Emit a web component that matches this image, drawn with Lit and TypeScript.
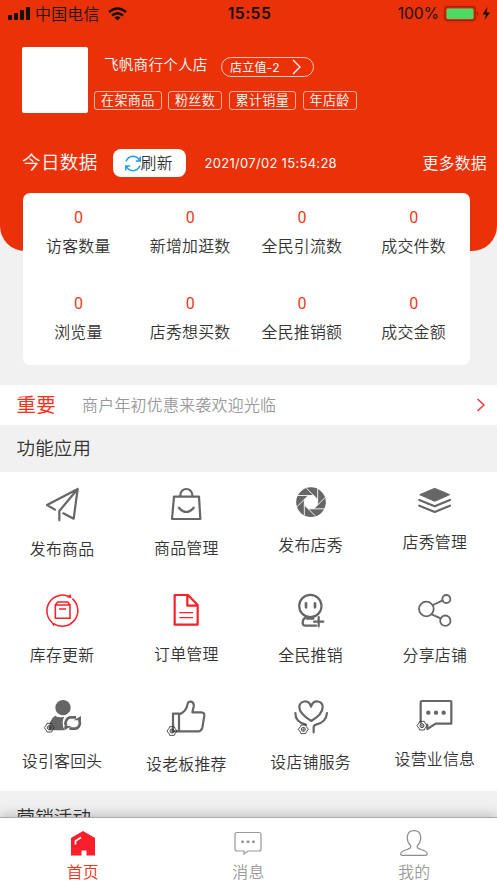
import { LitElement, html, css, svg } from "lit";
import { customElement } from "lit/decorators.js";

const gear = (x: number, y: number) => svg`
  <g transform="translate(${x} ${y})" fill="none" stroke="#333" stroke-width="2.6">
    <path d="M-7 -13H7L9 -8L15 0L9 8L7 13H-7L-9 8L-15 0L-9 -8Z"/>
    <circle r="6"/><path d="M0 -6V6M-6 0H6" stroke-width="1.6"/>
  </g>`;

const blades = [0, 45, 90, 135, 180, 225, 270, 315];

const apps = [
  { label: "发布商品", h: 33, x: 126, y: 54, icon: svg`
    <path class="s6" d="M165 119L141 105L233 57L221 146L190 130M178 151V123L233 57"/>` },
  { label: "商品管理", h: 32.5, x: 499, y: 54, icon: svg`
    <path class="s6" d="M523 80H598L602 147H517ZM542 79V75a18 18 0 0 1 36 0V79M538 113Q560 139 582 113"/>` },
  { label: "发布店秀", h: 29, x: 131, y: 54, icon: svg`
    <g transform="translate(191 96.5)">
      <circle r="44.5" fill="#666"/>
      ${blades.map((a) => svg`<path transform="rotate(${a})" d="M8.3 -20H-40" stroke="#fff" stroke-width="2.6"/>`)}
      <path fill="#fff" d="M8.3 -20H-8.3L-20 -8.3V8.3L-8.3 20H8.3L20 8.3V-8.3Z"/>
    </g>` },
  { label: "店秀管理", h: 26, x: 504, y: 54, icon: svg`
    <path fill="#666" stroke="#666" stroke-width="3" stroke-linejoin="round" d="M563 55L608 74L563 94L518 74Z"/>
    <path class="s6" stroke-linecap="butt" d="M517 90L563 109L609 90M517 107L563 126L609 107"/>` },
  { label: "库存更新", h: 33, x: 126, y: 372, icon: svg`
    <g fill="none" stroke="#f5222d" stroke-width="4.6">
      <path d="M208 380A47 47 0 0 0 157 458M164 463A47 47 0 0 0 217 386"/>
      <path d="M166 405H210V445H166ZM166 405L173 396H203L210 405M177 417H198"/>
    </g>
    <path fill="#f5222d" d="M200 382L211 372L215 385ZM154 456L167 461L160 469Z"/>` },
  { label: "订单管理", h: 32.5, x: 499, y: 372, icon: svg`
    <g fill="none" stroke="#fb2029" stroke-width="6.600" stroke-linejoin="round">
      <path d="M525 375H565L594 405V464H525ZM563 377V407H593"/>
      <path d="M539 428H580M539 443H580" stroke-width="4"/>
    </g>` },
  { label: "全民推销", h: 33, x: 131, y: 372, icon: svg`
    <circle class="s6" cx="189" cy="408" r="33.5"/>
    <path class="s6" d="M176 400V412M203 400V412" style="stroke-width:8"/>
    <path class="s6" d="M174 443Q166 447 166 458Q166 467 174 467H206M179 446H198M214 441V469M200 455H228"/>` },
  { label: "分享店铺", h: 33, x: 504, y: 372, icon: svg`
    <g class="s5"><circle cx="538" cy="417" r="22"/><circle cx="598" cy="387" r="12"/><circle cx="595" cy="452" r="15.5"/>
    <path d="M558 405L587 391M554 433L581 445"/></g>` },
  { label: "设引客回头", h: 33, x: 126, y: 90, icon: svg`
    <circle cx="189" cy="113" r="23" fill="#666"/>
    <path fill="#666" d="M165 137Q178 145 193 140Q182 158 194 181H147Q146 150 165 137Z"/>
    <path fill="none" stroke="#666" stroke-width="8" stroke-linejoin="round" d="M199 168L196 160Q200 142 212 142H228M238 150L240 160Q236 176 224 176H208"/>
    <path fill="#666" d="M221 151H243V138ZM215 168H193V181Z"/>
    ${gear(148, 173)}` },
  { label: "设老板推荐", h: 36, x: 499, y: 90, icon: svg`
    <path class="s6" d="M520 131H538V184H520ZM538 133C553 128 562 116 564 101Q566 93 574 95Q584 98 582 110L578 127H605Q615 128 614 137L608 173Q605 184 595 184H538"/>
    ${gear(517, 183)}` },
  { label: "设店铺服务", h: 34, x: 131, y: 90, icon: svg`
    <path class="s6" d="M192 153C172 141 156 128 156 112C156 92 184 86 191 110C199 86 226 92 226 112C226 128 212 141 192 153ZM144 129C144 148 158 160 176 164M239 129C237 151 224 160 206 164Q199 166 199 172V187"/>
    ${gear(168, 178)}` },
  { label: "设营业信息", h: 31, x: 504, y: 90, icon: svg`
    <path class="s6" d="M524 93H611Q613 93 613 96V161H566L541 177V164M521 158V97Q521 93 525 93"/>
    <g fill="#666"><circle cx="544" cy="128" r="6.500"/><circle cx="567" cy="128" r="6.500"/><circle cx="590" cy="128" r="6.500"/></g>
    ${gear(525, 167)}` },
];

const stats = ["访客数量", "新增加逛数", "全民引流数", "成交件数", "浏览量", "店秀想买数", "全民推销额", "成交金额"];
const tags = ["在架商品", "粉丝数", "累计销量", "年店龄"];

@customElement("app-root")
export class AppRoot extends LitElement {
  static styles = css`
    :host {
      display: flex; flex-direction: column; height: 883px; overflow: hidden;
      background: #f1f1f1; color: #333;
      font: 350 15.9px/20px "Noto Sans CJK SC", sans-serif;
      letter-spacing: .25px; white-space: nowrap;
    }
    * { box-sizing: border-box; }
    svg { display: block; flex: none; }
    .num { font-family: Inter, sans-serif; font-weight: 400; }
    .main { flex: 1; min-height: 0; overflow: hidden; }
    .hero { height: 251px; background: #eb3107; border-radius: 0 0 25px 25px; color: #fff; }
    .status { height: 27px; display: grid; grid-template-columns: 1fr auto 1fr; align-items: center; color: #161616; padding: 0 6px 0 8px; }
    .left, .right { display: flex; align-items: center; }
    .left svg.wifi { margin-left: 8px; }
    .carrier { margin-left: 5px; }
    .time { font-weight: 600; font-size: 15.6px; color: #111; letter-spacing: .5px; padding-top: 1px; }
    .right { justify-content: flex-end; }
    .right .num { font-size: 15.6px; margin-right: 5px; letter-spacing: 0; padding-top: 1px; }
    .shop { display: flex; padding: 19.5px 0 0 21.5px; }
    .avatar { width: 66.5px; height: 66.5px; background: #fff; border-radius: 2px; }
    .info { padding-left: 6px; padding-top: 9.5px; }
    .name-row { display: flex; align-items: center; height: 22px; padding-left: 10px; }
    .name { font-size: 14.6px; letter-spacing: .2px; width: 117px; margin-top: -6px; }
    .pill { height: 20px; width: 93px; border: 1px solid #ffc9bd; border-radius: 10px; padding: 0 12px 0 8px; display: flex; align-items: center; justify-content: space-between; font-size: 12px; font-weight: 400; line-height: 18px; letter-spacing: .2px; }
    .pill .num { font-size: 12px; letter-spacing: .6px; }
    .tags { display: flex; gap: 6.4px; margin-top: 13px; }
    .tag { height: 19px; border: 1px solid #ffb3a3; border-radius: 3px; padding: 0 6px; font-size: 13.1px; line-height: 16px; letter-spacing: .3px; }
    .today { display: flex; align-items: center; height: 28px; margin-top: 36px; padding: 0 10px 0 22px; }
    .today .title { font-size: 18.6px; letter-spacing: .3px; width: 90.5px; margin-top: -5px; }
    .refresh { width: 73.5px; height: 28px; background: #fff; color: #333; border-radius: 8px; display: flex; align-items: center; padding-left: 12px; }
    .date { font-size: 13px; margin-left: 18.5px; flex: 1; letter-spacing: .3px; }
    .card { margin: -58px 27px 0 23px; height: 172px; background: #fff; border-radius: 7px; display: grid; grid-template-columns: repeat(4, 1fr); grid-auto-rows: 86px; text-align: center; position: relative; }
    .stat { padding-top: 15px; }
    .stat .zero { font: 400 16px/20px Roboto, sans-serif; color: #eb3b22; letter-spacing: 0; margin-right: 1px; }
    .stat .cap { margin: 8px 1px 0 0; }
    .notice { margin-top: 20px; height: 39.5px; background: #fff; display: flex; align-items: center; padding: 0 12px 0 16.5px; }
    .notice b { color: #f5321e; font-weight: 400; font-size: 19.5px; width: 65.5px; margin-top: -1px; }
    .notice span { color: #999; flex: 1; letter-spacing: .3px; }
    .section { height: 47.5px; line-height: 45px; padding-left: 16.5px; font-size: 18.4px; }
    .apps { background: #fff; height: 319px; display: grid; grid-template-columns: repeat(4, 1fr); grid-auto-rows: 106px; }
    .app { display: flex; flex-direction: column; align-items: center; padding-top: 16px; }
    .app .cap { margin-top: 17.5px; }
    .s6, .s5 { fill: none; stroke: #666; stroke-width: 6.6; stroke-linejoin: round; stroke-linecap: round; }
    .s5 { stroke-width: 5.4; }
    .next { line-height: 51px; }
    .tabs { position: relative; flex: none; height: 66px; background: #fff; border-top: 1px solid #aaa; box-shadow: 0 -2px 12px rgba(0,0,0,.22); display: grid; grid-template-columns: repeat(3, 1fr); color: #999; }
    .tab { display: flex; flex-direction: column; align-items: center; padding-top: 12px; }
    .tab svg { margin-bottom: 6px; }
    .tab.on { color: #f0341c; }
  `;

  render() {
    return html`
      <div class="main">
        <div class="hero">
          <div class="status">
            <div class="left">
              <svg width="22" height="14" fill="#111"><rect x="0" y="8" width="4" height="5" rx="1"/><rect x="6" y="6" width="4" height="7" rx="1"/><rect x="12" y="3" width="4" height="10" rx="1"/><rect x="18" y="0" width="4" height="13" rx="1"/></svg>
              <span class="carrier">中国电信</span>
              <svg class="wifi" width="19" height="14" viewBox="0 0 19 14" fill="none" stroke="#111" stroke-width="2.5"><path d="M1 5Q9.500 -2 18 5M4 8.500Q9.500 4 15 8.500"/><path d="M6.500 10.500Q9.500 8 12.500 10.500L9.500 13.500Z" fill="#111" stroke="none"/></svg>
            </div>
            <span class="time num">15:55</span>
            <div class="right">
              <span class="num">100%</span>
              <svg width="47" height="16" viewBox="0 0 47 16"><rect x=".8" y=".8" width="30.500" height="13.800" rx="3" fill="none" stroke="#9d2207" stroke-width="1.500"/><rect x="2.500" y="2.600" width="27" height="10.400" rx="1.500" fill="#4cd964"/><path d="M33 5.500Q35 7.500 33 10Z" fill="#7c1b06"/><path d="M43.500 1L38.500 8.500H42L40.500 14L46 6.500H42.500Z" fill="#111"/></svg>
            </div>
          </div>
          <div class="shop">
            <div class="avatar"></div>
            <div class="info">
              <div class="name-row">
                <span class="name">飞帆商行个人店</span>
                <div class="pill"><span>店立值<span class="num">-2</span></span><svg width="9" height="16" viewBox="0 0 9 16" fill="none" stroke="#fff" stroke-width="1.300"><path d="M1 1L8 8L1 15"/></svg></div>
              </div>
              <div class="tags">${tags.map((t) => html`<div class="tag">${t}</div>`)}</div>
            </div>
          </div>
          <div class="today">
            <span class="title">今日数据</span>
            <div class="refresh">
              <svg width="16" height="17" viewBox="0 0 16 17" fill="none" stroke="#1b9df0" stroke-width="1.500"><path d="M1 6.500Q3 1.500 8 1.300Q12.500 1.300 14.500 5.500M15.300 1.500V6H10.800M15 10.500Q13 15.500 8 15.700Q3.500 15.700 1.500 11.500M.7 15.500V11H5.200"/></svg>
              <span>刷新</span>
            </div>
            <span class="date num">2021/07/02 15:54:28</span>
            <span>更多数据</span>
          </div>
        </div>
        <div class="card">
          ${stats.map((s) => html`<div class="stat"><div class="zero">0</div><div class="cap">${s}</div></div>`)}
        </div>
        <div class="notice"><b>重要</b><span>商户年初优惠来袭欢迎光临</span>
          <svg width="9" height="14" viewBox="0 0 9 14" fill="none" stroke="#fb2c36" stroke-width="1.400"><path d="M1.500 1L8 7L1.500 13"/></svg>
        </div>
        <div class="section">功能应用</div>
        <div class="apps">
          ${apps.map((a) => html`<div class="app">
            <svg width="40" height=${a.h} viewBox="${a.x} ${a.y} 120 ${a.h * 3}" overflow="visible">${a.icon}</svg>
            <div class="cap">${a.label}</div>
          </div>`)}
        </div>
        <div class="section next">营销活动</div>
      </div>
      <div class="tabs">
        <div class="tab on">
          <svg width="26" height="26" viewBox="0 0 26 26"><path fill="#fb1f2c" d="M13 1L25 8V25.500H16.500V20.500H11.500V25.500H1V8Z"/><path d="M5.500 14.500V11L11 7.500" fill="none" stroke="#fff" stroke-width="1.700"/></svg>首页</div>
        <div class="tab">
          <svg width="28" height="26" viewBox="0 0 28 26" fill="none" stroke="#999" stroke-width="1.200"><path d="M3 2.500H25Q27 2.500 27 4.500V19Q27 21 25 21H14L10 24V21H3Q1 21 1 19V4.500Q1 2.500 3 2.500Z"/><g fill="#999" stroke="none"><circle cx="8.500" cy="11.800" r="1.500"/><circle cx="14" cy="11.800" r="1.500"/><circle cx="19.500" cy="11.800" r="1.500"/></g></svg>消息</div>
        <div class="tab">
          <svg width="28" height="26" viewBox="0 0 28 26" fill="none" stroke="#8d8d8d" stroke-width="1.200"><path d="M10.500 15.500C6 11 5.500 .7 14 .7S22 11 17.500 15.500C16.500 18 18 18.500 21 19.500Q27.500 21.500 27.300 24Q27.300 25.400 25.500 25.400H2.500Q.7 25.400 .7 24Q.5 21.500 7 19.500C10 18.500 11.500 18 10.500 15.500Z"/></svg>我的</div>
      </div>`;
  }
}
